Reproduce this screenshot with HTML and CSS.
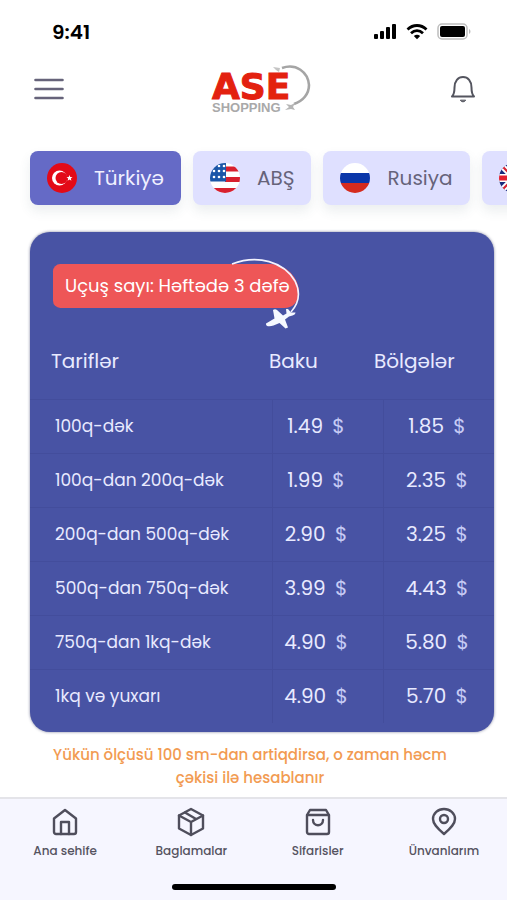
FILE: index.html
```html
<!DOCTYPE html>
<html lang="az">
<head>
    <meta charset="UTF-8">
    <meta name="viewport" content="width=device-width, initial-scale=1.0">
    <title>ASE Shopping</title>
    <link rel="stylesheet" href="styles.css">
</head>
<body>
    <div class="status-bar">
        <span class="time">9:41</span>
        <div class="status-icons">
            <svg width="23" height="16" viewBox="0 0 23 16"><rect x="0" y="10" width="4" height="5" rx="1"/><rect x="6" y="7" width="4" height="8" rx="1"/><rect x="12" y="3" width="4" height="12" rx="1"/><rect x="18" y="0" width="4" height="15" rx="1"/></svg>
            <svg width="22" height="16" viewBox="0 0 22 16" fill="none" stroke="#000" stroke-width="2.8"><path d="M1.5 5.4C7 .2 15 .2 20.500 5.400"/><path d="M5 9.200c3.600-3.300 8.400-3.300 12 0"/><path d="M7.800 12.100c2-1.700 4.400-1.700 6.400 0L11 15.200z" fill="#000" stroke="none"/></svg>
            <svg width="34" height="18" viewBox="0 0 34 18"><rect x="1" y="1" width="29" height="15" rx="4" fill="#fff" stroke="#bdbdbd" stroke-width="1.500"/><rect x="3" y="3" width="25" height="11" rx="2"/><path d="M32 6c2 1 2 4 0 5z" fill="#bdbdbd"/></svg>
        </div>
    </div>

    <header class="top-bar">
        <button class="icon-btn" type="button" aria-label="Menyu">
            <svg width="30" height="24" viewBox="0 0 30 24" fill="none" stroke="#66637a" stroke-width="2.600" stroke-linecap="round"><path d="M1.500 3h27M1.500 12h27M1.500 21h27"/></svg>
        </button>
        <svg class="logo" width="98" height="50" viewBox="0 0 98 50" role="img" aria-label="ASE Shopping">
            <text class="logo-name" x="0" y="35">ASE</text>
            <text class="logo-sub" x="0" y="48">SHOPPING</text>
            <path d="M70 4C84-1 96 8 97 21c0 9-6 16-15 19" fill="none" stroke="#a5a5a5" stroke-width="2.600"/>
            <path d="M61 3l7 1-1 4-3-2z" fill="#c4c4c4"/>
            <path d="M73 46l4-3-3-3 5 1 4-2-2 4 2 3-4-1z" fill="#b5b5b5"/>
        </svg>
        <button class="icon-btn" type="button" aria-label="Bildirişlər">
            <svg width="26" height="30" viewBox="0 0 26 30" fill="none" stroke="#54555f" stroke-width="2" stroke-linecap="round" stroke-linejoin="round"><path d="M2 22.500h22c-2.500-2.500-2.500-5-2.500-9C21.500 7 18 3 13 3s-8.500 4-8.500 10.500c0 4 0 6.500-2.500 9z"/><path d="M10.500 26.500c1 1.800 4 1.800 5 0z" fill="#54555f" stroke-width="1"/></svg>
        </button>
    </header>

    <nav class="countries">
        <button class="country active" type="button">
            <svg class="flag" viewBox="0 0 30 30"><circle cx="15" cy="15" r="15" fill="#e30a17"/><circle cx="12.500" cy="15" r="7.500" fill="#fff"/><circle cx="14.500" cy="15" r="6" fill="#e30a17"/><path d="M22.500 12l.8 2 2.200.2-1.700 1.300.6 2.200-1.900-1.200-1.900 1.200.6-2.200-1.700-1.300 2.200-.2z" fill="#fff"/></svg>
            Türkiyə
        </button>
        <button class="country" type="button">
            <svg class="flag" viewBox="0 0 30 30"><clipPath id="round"><circle cx="15" cy="15" r="15"/></clipPath><g clip-path="url(#round)"><path fill="#fff" d="M0 0h30v30H0z"/><path d="M15 6h15M15 16.500h15M0 27.500h30" stroke="#d8202f" stroke-width="5"/><path fill="#1b56a8" d="M0 0h16v18.500H0z"/><g fill="#fff"><circle cx="4" cy="8" r="1.300"/><circle cx="9" cy="8" r="1.300"/><circle cx="14" cy="8" r="1.300"/><circle cx="9" cy="3" r="1.300"/><circle cx="14" cy="3" r="1.300"/><circle cx="4" cy="14" r="1.300"/><circle cx="9" cy="14" r="1.300"/><circle cx="14" cy="14" r="1.300"/></g></g></svg>
            ABŞ
        </button>
        <button class="country" type="button">
            <svg class="flag" viewBox="0 0 30 30"><g clip-path="url(#round)"><path fill="#fff" d="M0 0h30v10H0z"/><path fill="#0a36a9" d="M0 10h30v10H0z"/><path fill="#d52b1e" d="M0 20h30v10H0z"/></g></svg>
            Rusiya
        </button>
        <button class="country" type="button" aria-label="İngiltərə">
            <svg class="flag" viewBox="0 0 30 30"><g clip-path="url(#round)"><path fill="#182a7c" d="M0 0h30v30H0z"/><path d="M0 0l30 30M30 0L0 30" stroke="#fff" stroke-width="6"/><path d="M0 0l30 30M30 0L0 30" stroke="#d8202f" stroke-width="2"/><path d="M15 0v30M0 15h30" stroke="#fff" stroke-width="8"/><path d="M15 0v30M0 15h30" stroke="#e3202f" stroke-width="5"/></g></svg>
        </button>
    </nav>

    <main>
        <section class="tariff-card">
            <div class="flights">
                Uçuş sayı: Həftədə 3 dəfə
                <svg class="plane" width="70" height="74" viewBox="0 0 70 74"><path d="M2 7C28-3 54 5 65 24c6 12 4 22-4 31" fill="none" stroke="#f3f3ff" stroke-width="1.600"/><path d="M36 66.500l8.500-5L43 53c1-1 3-1 4 0l6 5.500 3.500-2-.5-4.500h2l3 3.500 4.500 0c0 1.500-1.500 2.500-3 3l-3.500 1-4 3 3 8-2.500 1-6-5.500-6 2.500c-4 1.500-8 1-7.500-2z" fill="#f5f8ff"/></svg>
            </div>
            <table class="tariffs">
                <thead>
                    <tr><th>Tariflər</th><th>Baku</th><th>Bölgələr</th></tr>
                </thead>
                <tbody>
                    <tr><td>100q-dək</td><td>1.49 <span>$</span></td><td>1.85 <span>$</span></td></tr>
                    <tr><td>100q-dan 200q-dək</td><td>1.99 <span>$</span></td><td>2.35 <span>$</span></td></tr>
                    <tr><td>200q-dan 500q-dək</td><td>2.90 <span>$</span></td><td>3.25 <span>$</span></td></tr>
                    <tr><td>500q-dan 750q-dək</td><td>3.99 <span>$</span></td><td>4.43 <span>$</span></td></tr>
                    <tr><td>750q-dan 1kq-dək</td><td>4.90 <span>$</span></td><td>5.80 <span>$</span></td></tr>
                    <tr><td>1kq və yuxarı</td><td>4.90 <span>$</span></td><td>5.70 <span>$</span></td></tr>
                </tbody>
            </table>
        </section>
        <p class="note">Yükün ölçüsü 100 sm-dan artiqdirsa, o zaman həcm çəkisi ilə hesablanır</p>
    </main>

    <footer class="tab-bar">
        <nav class="tabs">
            <a class="tab" href="#">
                <svg class="tab-icon" viewBox="0 0 30 30"><path d="M4 11.500L15 3l11 8.500V25a2 2 0 0 1-2 2H6a2 2 0 0 1-2-2z"/><path d="M11 27V15h8v12"/></svg>
                Ana sehife
            </a>
            <a class="tab" href="#">
                <svg class="tab-icon" viewBox="0 0 30 30"><path d="M15 2l12 6.500v13L15 28 3 21.500v-13z"/><path d="M3 8.500L15 15l12-6.500M15 15v13M9 5.500l11 6.500"/></svg>
                Baglamalar
            </a>
            <a class="tab" href="#">
                <svg class="tab-icon" viewBox="0 0 30 30"><path d="M4 8l3-5h16l3 5v17a2 2 0 0 1-2 2H6a2 2 0 0 1-2-2zM4 8h22"/><path d="M10 13c0 7 10 7 10 0"/></svg>
                Sifarisler
            </a>
            <a class="tab" href="#">
                <svg class="tab-icon" viewBox="0 0 30 30"><path d="M15 27C8 21 4 17 4 12a11 10 0 0 1 22 0c0 5-4 9-11 15z"/><circle cx="15" cy="12" r="4"/></svg>
                Ünvanlarım
            </a>
        </nav>
        <div class="home-indicator"></div>
    </footer>
</body>
</html>
```
FILE: styles.css
```css
* {
    box-sizing: border-box;
}
body {
    margin: 0;
    min-height: 100vh;
    display: flex;
    flex-direction: column;
    background-color: #fff;
    font-family: Poppins, Inter, "Noto Sans", sans-serif;
    font-size: 18px;
}
button {
    border: 0;
    background: none;
    padding: 0;
    font: inherit;
    cursor: pointer;
}
svg {
    display: block;
    flex-shrink: 0;
}
.status-bar {
    display: flex;
    align-items: center;
    justify-content: space-between;
    height: 64px;
    padding: 0 36px 0 52px;
}
.time {
    font-size: 20px;
    font-weight: 600;
}
.status-icons {
    display: flex;
    align-items: center;
    gap: 9px;
}
.top-bar {
    display: flex;
    align-items: center;
    justify-content: space-between;
    height: 50px;
    padding: 0 31px 0 34px;
}
.logo {
    margin-left: 8px;
    overflow: visible;
}
.logo-name {
    font-family: "DejaVu Sans", sans-serif;
    font-size: 36px;
    font-weight: 700;
    fill: #e3210f;
    stroke: #e3210f;
    stroke-width: 1;
}
.logo-sub {
    font-family: "Liberation Sans", Arial, sans-serif;
    font-size: 13px;
    font-weight: 700;
    fill: #a9a9a9;
}
.countries {
    display: flex;
    gap: 12px;
    padding: 37px 0 27px 30px;
    overflow-x: auto;
    scrollbar-width: none;
}
.country {
    display: flex;
    align-items: center;
    flex-shrink: 0;
    gap: 17px;
    height: 54px;
    padding: 0 17px;
    border-radius: 8px;
    background-color: #dfe0ff;
    color: #66637a;
    font-size: 20px;
    box-shadow: 0 6px 12px rgba(60, 90, 100, 0.1);
}
.country.active {
    background-color: #656ac6;
    color: #f0f0ff;
}
.flag {
    width: 30px;
    height: 30px;
}
main {
    flex: 1;
    padding: 0 13px 0 30px;
}
.tariff-card {
    padding: 32px 0 9px;
    border-radius: 20px;
    background-color: #4853a4;
    color: #e8eaff;
    box-shadow: 0 0 3px rgba(40, 45, 90, 0.6);
}
.flights {
    position: relative;
    width: fit-content;
    margin-left: 23px;
    padding: 0 9px 0 12px;
    border-radius: 8px 32px 16px 8px;
    background-color: #ee5657;
    color: #fff;
    line-height: 44px;
}
/* flight path runs over the corner of the badge */
.plane {
    position: absolute;
    right: -1px;
    top: -7px;
}
.tariffs {
    display: block;
}
.tariffs thead,
.tariffs tbody {
    display: block;
}
.tariffs tr {
    display: grid;
    grid-template-columns: 242fr 111fr 111fr;
}
.tariffs thead tr {
    grid-template-columns: 239fr 105fr 120fr;
    height: 91px;
    align-items: center;
    padding-top: 14px;
}
.tariffs th {
    padding: 0;
    font-size: 20px;
    font-weight: 400;
    text-align: left;
}
.tariffs th:first-child {
    padding-left: 21px;
}
.tariffs td {
    padding: 0;
    border-top: 1px solid #434d9c;
    font-size: 20px;
    line-height: 53px;
    text-align: center;
}
.tariffs td:first-child {
    padding-left: 25px;
    font-size: 17px;
    text-align: left;
}
.tariffs td + td {
    padding-right: 4px;
    border-left: 1px solid #434d9c;
}
.tariffs td:nth-child(2) {
    padding-right: 24px;
}
.tariffs span {
    margin-left: 4px;
    color: #c6cbf5;
}
.note {
    margin: 11px 36px 7px 12px;
    color: #f29b52;
    font-size: 15px;
    font-weight: 500;
    line-height: 23px;
    text-align: center;
}
.tab-bar {
    border-top: 2px solid #e4e4e9;
    background-color: #f6f6ff;
}
.tabs {
    display: flex;
    padding: 8px 0 24px 2px;
}
.tab {
    display: flex;
    flex: 1;
    flex-direction: column;
    align-items: center;
    gap: 5px;
    color: #55535f;
    font-size: 12px;
    font-weight: 500;
    line-height: 18px;
    text-decoration: none;
}
.tab-icon {
    width: 30px;
    height: 30px;
    fill: none;
    stroke: #4f4e5c;
    stroke-width: 2.4;
    stroke-linejoin: round;
    stroke-linecap: round;
}
.home-indicator {
    width: 164px;
    height: 6px;
    margin: 0 auto 10px;
    border-radius: 3px;
    background-color: #000;
}
```
